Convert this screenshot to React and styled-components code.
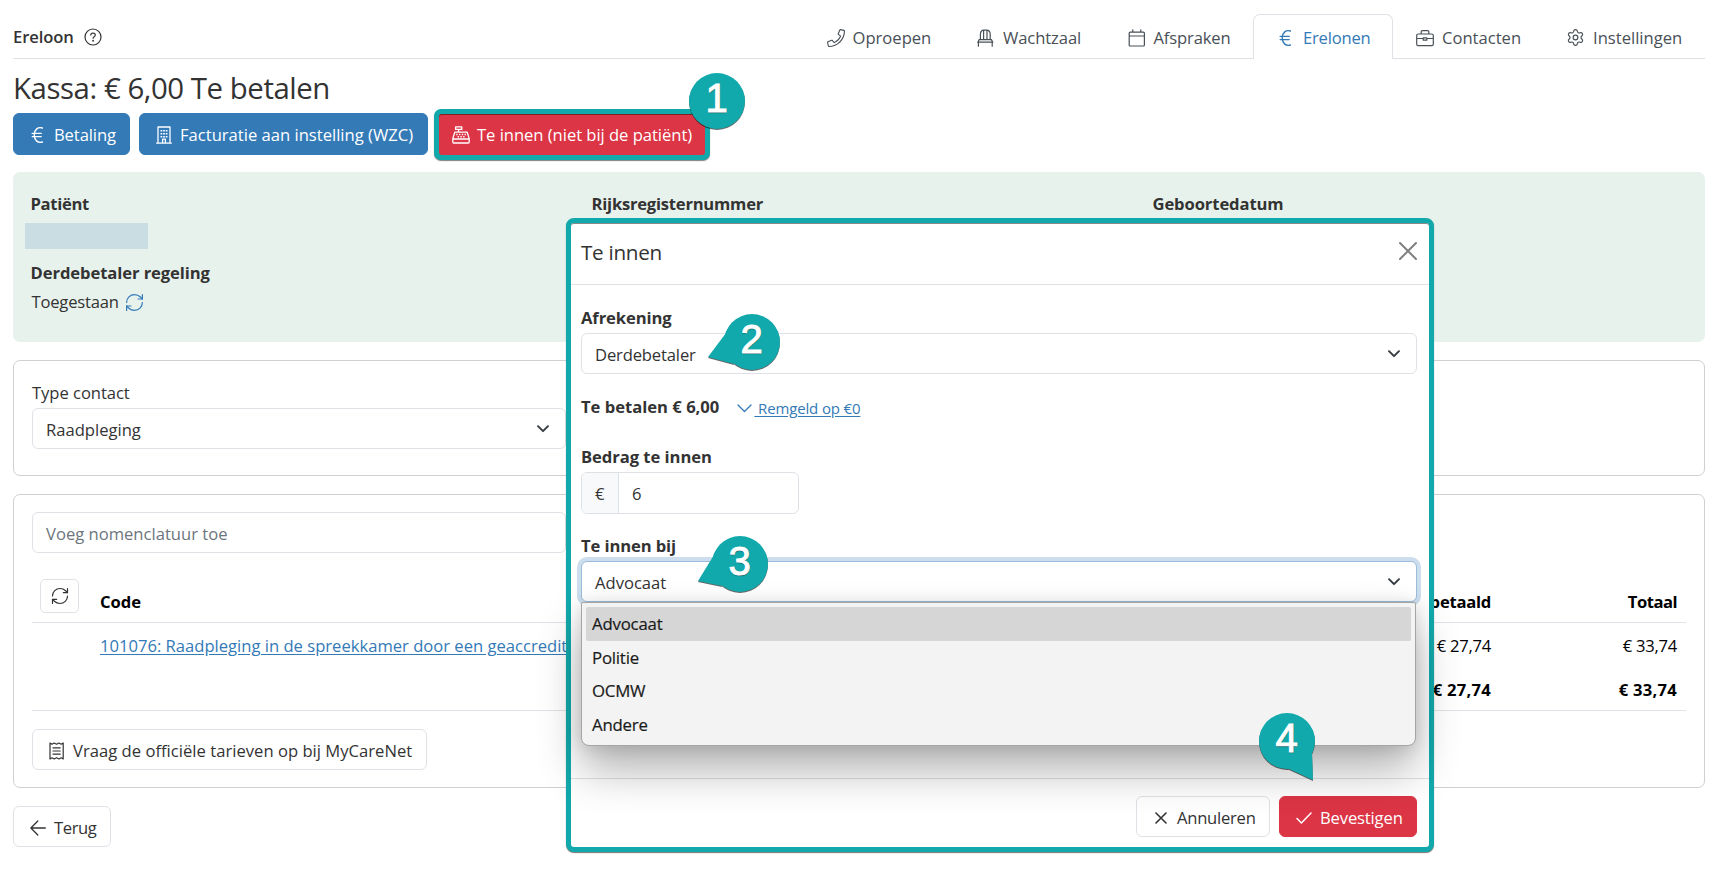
import React from "react"
import styled, { createGlobalStyle, css } from 'styled-components'
import { RefreshCw, Settings } from 'lucide-react'

const Global = createGlobalStyle`
  *{
    box-sizing: border-box;
  }
  body{
    margin: 0;
    background: #fff;
    color: #333;
    font-family: 'Open Sans', 'Noto Sans', sans-serif;
    font-size: 16.6px;
    line-height: 26px;
    overflow: hidden;
  }
`

const Page = styled.div`
  position: relative;
  width: 1714px;
  height: 890px;
  padding: 0 9px 0 13px;
  overflow: hidden;
`

const Text = styled.span`
  white-space: nowrap;
  letter-spacing: ${x => x.ls || 0}px;
`

const Svg = styled.svg`
  display: block;
  flex: none;
  fill: none;
  stroke: currentColor;
  stroke-width: ${x => x.sw || 1.2};
  stroke-linecap: round;
  stroke-linejoin: round;
`

const Header = styled.header`
  display: flex;
  justify-content: space-between;
  height: 59px;
  padding-top: 14px;
  border-bottom: 1px solid #dee2e6;
`

const Crumb = styled.div`
  display: flex;
  align-items: center;
  height: 46px;
  gap: 10px;
  font-weight: 600;
`

const Tabs = styled.nav`
  display: flex;
  height: 45px;
`

const Tab = styled.a`
  display: flex;
  align-items: center;
  width: ${x => x.w}px;
  padding: 1px 0 0 ${x => x.pl || 23}px;
  border: 1px solid transparent;
  border-bottom: 0;
  border-radius: 7px 7px 0 0;
  color: #495057;
  ${x => x.active && css`
    color: #337ab7;
    background: #fff;
    border-color: #dee2e6;
  `}
  svg{
    margin-right: 8px;
  }
`

const Title = styled.h1`
  margin: 0;
  height: 54px;
  padding-top: 9px;
  font-size: 29.4px;
  font-weight: 400;
  line-height: 41px;
`

const Actions = styled.div`
  display: flex;
  align-items: flex-start;
  gap: 9px;
  height: 59px;
`

const Button = styled.button`
  display: flex;
  align-items: center;
  width: ${x => x.w}px;
  height: ${x => x.h || 42}px;
  margin-top: ${x => x.mt || 0}px;
  padding: 2px 0 0 ${x => x.pl || 16}px;
  border: 1px solid ${x => x.color || '#dee2e6'};
  border-radius: 6px;
  background: ${x => x.color || '#fff'};
  color: ${x => x.color ? '#fff' : '#333'};
  font: inherit;
  gap: ${x => x.gap || 8}px;
`

const Highlight = styled.div`
  margin: -4px 0 0 -3px;
  padding: 5px;
  border-radius: 7px;
  background: #12a9ac;
  box-shadow: 0 1px 1px rgba(0, 0, 0, 0.5);
  button{
    padding-top: 0;
    border: 0;
    border-radius: 3px;
    box-shadow: inset 0 1px 0 #7c2029;
  }
`

const Patient = styled.section`
  display: grid;
  grid-template-columns: 561px 561px 1fr;
  height: 170px;
  padding: 19px 0 0 17.5px;
  border-radius: 7px;
  background: #e8f2ec;
  overflow: hidden;
`

const Strong = styled.div`
  font-weight: 700;
  white-space: nowrap;
  letter-spacing: ${x => x.ls || 0}px;
`

const Redacted = styled.div`
  width: 123px;
  height: 26px;
  margin: 6px 0 11px -6px;
  background: #cadde3;
`

const Status = styled.div`
  display: flex;
  align-items: center;
  gap: 5px;
  padding: 3px 0 0 1px;
  svg{
    color: #337ab7;
  }
`

const Card = styled.section`
  height: ${x => x.h}px;
  margin-top: 18px;
  padding: ${x => x.pt}px 18px 0;
  border: 1px solid #ced0d2;
  border-radius: 7px;
`

const Label = styled.div`
  height: 28px;
  letter-spacing: -0.05px;
`

const Control = styled.div`
  display: flex;
  align-items: center;
  justify-content: space-between;
  width: ${x => x.w || '100%'};
  height: 41px;
  padding: 2px 16px 0 13px;
  border: 1px solid #dee2e6;
  border-radius: 6px;
  background: #fff;
  color: ${x => x.muted ? '#6c757d' : '#333'};
  svg{
    color: #343a40;
    margin-top: -2px;
  }
  ${x => x.focused && css`
    border-color: #99bddb;
    box-shadow: 0 0 0 4px #ccdeed;
  `}
`

const Table = styled.div`
  margin-top: 21px;
  color: #000;
`

const Row = styled.div`
  display: grid;
  grid-template-columns: 68px 1fr 186px;
  align-items: end;
  height: ${x => x.h}px;
  padding: 0 9px ${x => x.pb}px 0;
  border-bottom: ${x => x.line ? '1px solid #dee2e6' : '0'};
  font-weight: ${x => x.bold ? 700 : 400};
  > :last-child{
    text-align: right;
  }
`

const Cell = styled.div`
  display: flex;
  justify-content: space-between;
`

const Reload = styled.button`
  display: grid;
  place-items: center;
  width: 39px;
  height: 34px;
  margin: 0 0 2px 8px;
  padding: 0;
  border: 1px solid #dee2e6;
  border-radius: 5px;
  background: #fff;
  color: #333;
`

const Link = styled.a`
  color: #337ab7;
  font-size: ${x => x.size || 16.6}px;
  letter-spacing: ${x => x.ls || 0}px;
  text-decoration: underline;
  text-underline-offset: 2px;
  white-space: pre;
`

const Dialog = styled.div`
  position: absolute;
  left: 566px;
  top: 218px;
  width: 868px;
  height: 634px;
  display: flex;
  flex-direction: column;
  border: 5px solid #12a9ac;
  border-radius: 8px;
  background: #fff;
  box-shadow: 0 1px 1px rgba(0, 0, 0, 0.55), inset 0 1px 0 #888;
`

const DialogHead = styled.div`
  display: flex;
  justify-content: space-between;
  height: 62px;
  padding: 14px 12px 0 10px;
  border-bottom: 1px solid #dee2e6;
  font-size: 20.7px;
  line-height: 30px;
  svg{
    color: #7f7f7f;
    margin-top: 5px;
  }
`

const DialogBody = styled.div`
  flex: 1;
  padding: 20px 12px 0 10px;
`

const Payable = styled.div`
  display: flex;
  align-items: center;
  height: 26px;
  margin: 20px 0 24px;
  svg{
    margin: 3px 2px 0 18px;
    color: #337ab7;
  }
  a{
    margin-top: 2px;
  }
`

const Amount = styled.div`
  display: flex;
  width: 218px;
  height: 42px;
  margin: 2px 0 19px;
  border: 1px solid #dee2e6;
  border-radius: 6px;
  overflow: hidden;
  line-height: 42px;
  span{
    width: 37px;
    padding-left: 13px;
    background: #f8f9fa;
    border-right: 1px solid #dee2e6;
  }
  div{
    padding-left: 13px;
  }
`

const Field = styled.div`
  position: relative;
  margin-top: 2px;
`

const Menu = styled.ul`
  position: absolute;
  left: 0;
  top: 41px;
  width: 835px;
  height: 144px;
  margin: 0;
  padding: 4px;
  list-style: none;
  border: 1px solid #a5a5a5;
  border-radius: 2px 2px 8px 8px;
  background: #f3f3f3;
  box-shadow: 0 24px 44px rgba(0, 0, 0, 0.3), 0 2px 16px rgba(0, 0, 0, 0.12);
  color: #1a1a1a;
`

const Option = styled.li`
  height: 33.7px;
  padding-left: 6px;
  border-radius: 2px;
  background: ${x => x.selected ? '#d6d6d6' : 'none'};
  font-size: 16.8px;
  line-height: 33px;
  letter-spacing: -0.2px;
  -webkit-text-stroke: 0.2px;
`

const DialogFoot = styled.div`
  display: flex;
  justify-content: flex-end;
  gap: 9px;
  height: 69px;
  padding: 17px 12px 0 0;
  border-top: 1px solid #dee2e6;
`

const Callout = styled.div`
  position: absolute;
  left: ${x => x.x - 28}px;
  top: ${x => x.y - 28}px;
  width: 56px;
  height: 56px;
  color: #fff;
  font-family: 'Liberation Sans', Arial, sans-serif;
  font-size: 40px;
  line-height: 50px;
  text-align: center;
  text-shadow: 0 1px 1px rgba(0, 0, 0, 0.6);
  -webkit-text-stroke: 1px #fff;
  svg{
    position: absolute;
    left: 0;
    top: 0;
    overflow: visible;
    fill: #12a9ac;
    stroke: none;
    filter: drop-shadow(0 1px 0.6px rgba(0, 0, 0, 0.6));
  }
  span{
    position: relative;
  }
`

const Help = () =>
  <Svg width="18" height="18" viewBox="0 0 18 18">
    <circle cx="9" cy="9" r="8" />
    <path d="M6.8 7.1C6.8 5.9 7.7 5.1 9 5.1S11.3 5.9 11.3 7.1C11.3 8.6 9.1 8.7 9.1 10.2" />
    <path d="M9.1 12.7v.1" strokeWidth="1.8" />
  </Svg>

const Phone = () =>
  <Svg width="18" height="18" viewBox="0 0 512 512">
    <path fill="currentColor" stroke="none" d="M487.8 24.1L387 .8c-14.7-3.4-29.8 4.2-35.8 18.1l-46.5 108.5c-5.5 12.7-1.8 27.7 8.9 36.5l53.9 44.1c-34 69.2-90.3 125.6-159.6 159.6l-44.1-53.9c-8.8-10.7-23.8-14.4-36.5-8.9L18.9 351.3C5 357.2-2.6 372.3.8 387L24 487.7C27.3 502 39.9 512 54.5 512 306.7 512 512 307.8 512 54.5c0-14.6-10-27.2-24.2-30.4zM55.1 480l-23-99.6 107.4-46 59.5 72.8c103.6-48.6 159.7-104.9 208.1-208.1l-72.8-59.5 46-107.4 99.6 23C479.7 289.7 289.6 479.7 55.1 480z" />
  </Svg>

const Chair = () =>
  <Svg width="18" height="18" viewBox="0 0 18 18">
    <path d="M3.4 10.6V5.4C3.4 2.6 4.6 1.2 7 1.2H9.6C12 1.2 13.2 2.6 13.2 5.4V10.6M6.6 1.4V10.6M10 1.4V10.6M2.2 10.6H14.4L15.8 13.2H.8ZM1.4 13.2V17.2M15.2 13.2V17.2" />
  </Svg>

const Calendar = () =>
  <Svg width="18" height="18" viewBox="0 0 18 18">
    <path d="M2.2 3.2H15.4Q16.4 3.2 16.4 4.2V16Q16.4 17 15.4 17H2.2Q1.2 17 1.2 16V4.2Q1.2 3.2 2.2 3.2ZM1.2 7H16.4M4.8 .8V3.2M12.8 .8V3.2" />
  </Svg>

const Euro = ({ sw }) =>
  <Svg width="18" height="18" viewBox="0 0 18 18" sw={sw || 1.4}>
    <path d="M13.4 2C9 .6 5.4 3.4 5.2 9C5.4 14.6 9 17.4 13.4 16M3.2 7.4H12.2M3.2 10.6H12.2" />
  </Svg>

const Briefcase = () =>
  <Svg width="18" height="18" viewBox="0 0 18 18">
    <path d="M2.2 5H15.8Q17.3 5 17.3 6.5V15.2Q17.3 16.6 15.8 16.6H2.2Q.7 16.6 .7 15.2V6.5Q.7 5 2.2 5ZM5.2 5V2.6Q5.2 1.6 6.2 1.6H11.8Q12.8 1.6 12.8 2.6V5M.7 9.5H7.2M10.8 9.5H17.3M7.2 8.9H10.8V11.2H7.2Z" />
  </Svg>

const Building = () =>
  <Svg width="16" height="18" viewBox="0 0 16 18" sw="1.3">
    <path d="M2 17V1H14V17M.7 17.2H15.3M6.6 17V13.2H9.4V17" />
    <path d="M5.4 4V11.6M8 4V11.6M10.6 4V11.6" strokeWidth="1.7" strokeDasharray="1.6 1.4" strokeLinecap="butt" />
  </Svg>

const Register = () =>
  <Svg width="18" height="18" viewBox="0 0 18 18" sw="1.3">
    <path d="M3.6 .8H9.8V3.4H3.6ZM6.6 3.6V6M2.8 6.2H15.2L17.2 12.6V16Q17.2 17 16.2 17H1.8Q.8 17 .8 16V12.6ZM.8 13H17.2" />
    <path d="M4.2 8.6H14.4M5.6 10.8H13" strokeWidth="1.5" strokeDasharray="1.4 1.4" strokeLinecap="butt" />
  </Svg>

const Receipt = () =>
  <Svg width="16" height="18" viewBox="0 0 16 18">
    <path d="M1 1L3 2.2L5.2 1L7.6 2.2L10 1L12.2 2.2L14.2 1V17L12.2 15.8L10 17L7.6 15.8L5.2 17L3 15.8L1 17ZM4 5.8H11.2M4 9H11.2M4 12.2H11.2" />
  </Svg>

const Caret = () =>
  <Svg width="12" height="8" viewBox="0 0 12 8" sw="1.9">
    <path d="M1 1.2L6 6.2L11 1.2" />
  </Svg>

const tabs = [
  { name: 'Oproepen', w: 150, pl: 22.5, icon: <Phone /> },
  { name: 'Wachtzaal', w: 150, ls: -0.1, icon: <Chair /> },
  { name: 'Afspraken', w: 150, pl: 23.5, ls: -0.15, icon: <Calendar /> },
  { name: 'Erelonen', w: 140, ls: -0.2, icon: <Euro />, active: true },
  { name: 'Contacten', w: 151, pl: 22, icon: <Briefcase /> },
  { name: 'Instellingen', w: 161, pl: 21, icon: <Settings size={19} strokeWidth={1.5} /> },
]

const callouts = [
  { n: 1, x: 716.5, y: 101 },
  { n: 2, x: 751.5, y: 341.5, tail: '2,19 -16,43 10,50' },
  { n: 3, x: 739.5, y: 563.5, tail: '2,19 -14,45 10,50' },
  { n: 4, x: 1286.5, y: 740.5, tail: '28,55 54,67 53,40' },
]

const options = ['Advocaat', 'Politie', 'OCMW', 'Andere']

export default () =>
  <Page>
    <Global />

    <Header>
      <Crumb><Text ls={-0.1}>Ereloon</Text><Help /></Crumb>
      <Tabs>
        {tabs.map(i =>
          <Tab key={i.name} w={i.w} pl={i.pl} active={i.active}>{i.icon}<Text ls={i.ls}>{i.name}</Text></Tab>
        )}
      </Tabs>
    </Header>

    <Title><Text ls={-0.45}>Kassa: € 6,00 Te betalen</Text></Title>

    <Actions>
      <Button w={117} pl={15} gap={7} color="#337ab7"><Euro /><Text ls={-0.1}>Betaling</Text></Button>
      <Button w={289} color="#337ab7"><Building /><Text>Facturatie aan instelling (WZC)</Text></Button>
      <Highlight>
        <Button w={266} h={41} pl={13} gap={7} color="#dc3545"><Register /><Text ls={-0.04}>Te innen (niet bij de patiënt)</Text></Button>
      </Highlight>
    </Actions>

    <Patient>
      <div>
        <Strong ls={-0.3}>Patiënt</Strong>
        <Redacted />
        <Strong ls={-0.08}>Derdebetaler regeling</Strong>
        <Status><Text ls={-0.2}>Toegestaan</Text><RefreshCw size={21} strokeWidth={1.4} /></Status>
      </div>
      <Strong ls={-0.23}>Rijksregisternummer</Strong>
      <Strong ls={-0.1}>Geboortedatum</Strong>
    </Patient>

    <Card h={116} pt={19}>
      <Label>Type contact</Label>
      <Control w="534px"><Text>Raadpleging</Text><Caret /></Control>
    </Card>

    <Card h={294} pt={17}>
      <Control w="534px" muted><Text>Voeg nomenclatuur toe</Text></Control>
      <Table>
        <Row h={49} pb={7} bold line>
          <Reload><RefreshCw size={20} strokeWidth={1.4} /></Reload>
          <Cell><Text>Code</Text><Text ls={-0.25}>Derdebetaler betaald</Text></Cell>
          <Text ls={-0.5}>Totaal</Text>
        </Row>
        <Row h={44} pb={8}>
          <i />
          <Cell>
            <Link>101076: Raadpleging in de spreekkamer door een geaccredit</Link>
            <Text ls={-0.25}>€ 27,74</Text>
          </Cell>
          <Text ls={-0.25}>€ 33,74</Text>
        </Row>
        <Row h={44} pb={7} bold line>
          <i />
          <Cell><i /><Text ls={0.25}>€ 27,74</Text></Cell>
          <Text ls={0.25}>€ 33,74</Text>
        </Row>
      </Table>
      <Button w={395} h={41} mt={18}><Receipt /><Text ls={0.02}>Vraag de officiële tarieven op bij MyCareNet</Text></Button>
    </Card>

    <Button w={98} h={41} mt={18}>
      <Svg width="16" height="16" viewBox="0 0 16 16" sw="1.3"><path d="M15.3 8H1M7.8 1L.9 8L7.8 15" /></Svg>
      <Text ls={-0.4}>Terug</Text>
    </Button>

    <Dialog>
      <DialogHead>
        <Text ls={-0.3}>Te innen</Text>
        <Svg width="18" height="18" viewBox="0 0 18 18" sw="2"><path d="M1 1L17 17M17 1L1 17" /></Svg>
      </DialogHead>
      <DialogBody>
        <Strong ls={-0.1}>Afrekening</Strong>
        <Field><Control><Text ls={-0.15}>Derdebetaler</Text><Caret /></Control></Field>
        <Payable>
          <Strong>Te betalen € 6,00</Strong>
          <Svg width="15" height="9" viewBox="0 0 15 9" sw="1.3"><path d="M1 1L7.5 7.5L14 1" /></Svg>
          <Link size={15} ls={-0.15}> Remgeld op €0</Link>
        </Payable>
        <Strong ls={-0.05}>Bedrag te innen</Strong>
        <Amount><span>€</span><div>6</div></Amount>
        <Strong ls={-0.1}>Te innen bij</Strong>
        <Field>
          <Control focused><Text>Advocaat</Text><Caret /></Control>
          <Menu>
            {options.map((name, index) => <Option key={name} selected={index === 0}>{name}</Option>)}
          </Menu>
        </Field>
      </DialogBody>
      <DialogFoot>
        <Button w={134} h={41} pl={18} gap={10}>
          <Svg width="12" height="12" viewBox="0 0 12 12" sw="1.6"><path d="M1 1L11 11M11 1L1 11" /></Svg>
          <Text ls={-0.25}>Annuleren</Text>
        </Button>
        <Button w={138} h={41} color="#dc3545">
          <Svg width="16" height="12" viewBox="0 0 16 12" sw="1.5"><path d="M1 6.5L5.4 11L15 1" /></Svg>
          <Text ls={-0.15}>Bevestigen</Text>
        </Button>
      </DialogFoot>
    </Dialog>

    {callouts.map(i =>
      <Callout key={i.n} x={i.x} y={i.y}>
        <svg width="56" height="56" viewBox="0 0 56 56">
          <circle cx="28" cy="28" r="28" />
          {i.tail && <polygon points={i.tail} />}
        </svg>
        <span>{i.n}</span>
      </Callout>
    )}
  </Page>
